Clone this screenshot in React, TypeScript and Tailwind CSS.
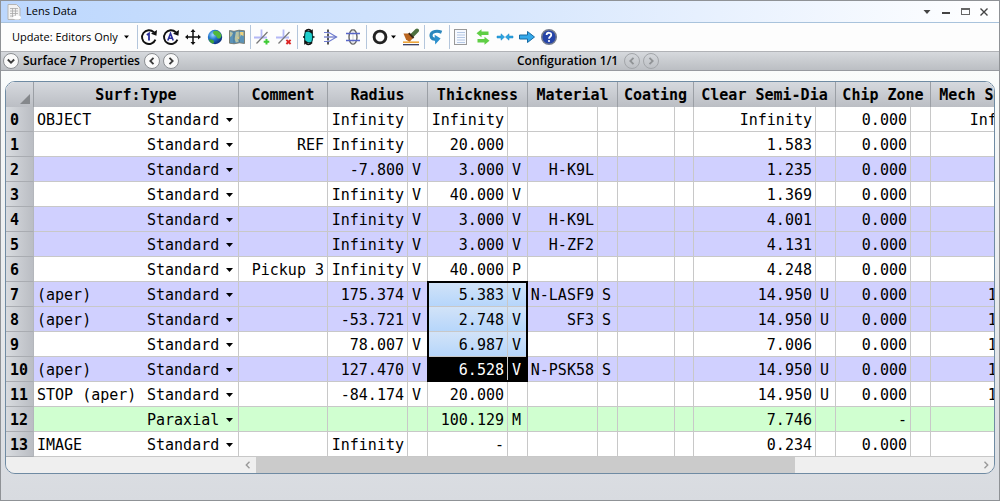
import React from "react";

const UI = "font-['Open_Sans','Noto_Sans',sans-serif]";

type Row = {
  label: string;
  type: string;
  comment?: string;
  radius?: [string, string?];
  thickness: [string, string?];
  material?: [string, string?];
  clear: [string, string?];
  chip: string;
  mech?: string;
  tint?: "violet" | "green";
  pick?: "range" | "active";
};

const rows: Row[] = [
  { label: "OBJECT", type: "Standard", radius: ["Infinity"], thickness: ["Infinity"], clear: ["Infinity"], chip: "0.000", mech: "Infinity" },
  { label: "", type: "Standard", comment: "REF", radius: ["Infinity"], thickness: ["20.000"], clear: ["1.583"], chip: "0.000" },
  { label: "", type: "Standard", radius: ["-7.800", "V"], thickness: ["3.000", "V"], material: ["H-K9L"], clear: ["1.235"], chip: "0.000", tint: "violet" },
  { label: "", type: "Standard", radius: ["Infinity", "V"], thickness: ["40.000", "V"], clear: ["1.369"], chip: "0.000" },
  { label: "", type: "Standard", radius: ["Infinity", "V"], thickness: ["3.000", "V"], material: ["H-K9L"], clear: ["4.001"], chip: "0.000", tint: "violet" },
  { label: "", type: "Standard", radius: ["Infinity", "V"], thickness: ["3.000", "V"], material: ["H-ZF2"], clear: ["4.131"], chip: "0.000", tint: "violet" },
  { label: "", type: "Standard", comment: "Pickup 3", radius: ["Infinity", "V"], thickness: ["40.000", "P"], clear: ["4.248"], chip: "0.000" },
  { label: "(aper)", type: "Standard", radius: ["175.374", "V"], thickness: ["5.383", "V"], material: ["N-LASF9", "S"], clear: ["14.950", "U"], chip: "0.000", mech: "14.950", tint: "violet", pick: "range" },
  { label: "(aper)", type: "Standard", radius: ["-53.721", "V"], thickness: ["2.748", "V"], material: ["SF3", "S"], clear: ["14.950", "U"], chip: "0.000", mech: "14.950", tint: "violet", pick: "range" },
  { label: "", type: "Standard", radius: ["78.007", "V"], thickness: ["6.987", "V"], clear: ["7.006"], chip: "0.000", mech: "14.950", pick: "range" },
  { label: "(aper)", type: "Standard", radius: ["127.470", "V"], thickness: ["6.528", "V"], material: ["N-PSK58", "S"], clear: ["14.950", "U"], chip: "0.000", mech: "14.950", tint: "violet", pick: "active" },
  { label: "STOP (aper)", type: "Standard", radius: ["-84.174", "V"], thickness: ["20.000"], clear: ["14.950", "U"], chip: "0.000", mech: "14.950" },
  { label: "", type: "Paraxial", thickness: ["100.129", "M"], clear: ["7.746"], chip: "-", tint: "green" },
  { label: "IMAGE", type: "Standard", radius: ["Infinity"], thickness: ["-"], clear: ["0.234"], chip: "0.000" },
];

const headers: [string, number][] = [
  ["Surf:Type", 1],
  ["Comment", 1],
  ["Radius", 2],
  ["Thickness", 2],
  ["Material", 2],
  ["Coating", 2],
  ["Clear Semi-Dia", 2],
  ["Chip Zone", 2],
  ["Mech Semi-Dia", 2],
];

function Caret({ className = "w-[7px]" }: { className?: string }) {
  return (
    <svg viewBox="0 0 7 4" className={`h-1 ${className}`} aria-hidden="true">
      <path d="M0 0H7L3.5 4Z" fill="currentColor" />
    </svg>
  );
}

function Tool({ label, wide, children }: { label: string; wide?: boolean; children: React.ReactNode }) {
  return (
    <button type="button" aria-label={label} className={`flex h-6 shrink-0 items-center ${wide ? "w-[33px] gap-0.5 pl-1" : "w-[22px] justify-center"}`}>
      <svg viewBox="0 0 18 18" className="h-[18px] w-[18px] shrink-0" fill="none">
        {children}
      </svg>
      {wide && <Caret className="w-[5px]" />}
    </button>
  );
}

const Sep = () => <span className="ml-0.5 h-6 w-px shrink-0 bg-[#b4c6dc]" />;

const Cycle = () => (
  <>
    <path d="M13.8 4.2A6.9 6.9 0 1 0 15.4 11.6" stroke="#111" strokeWidth="1.9" />
    <path d="M11 5.8L17 2L16.4 7.8Z" fill="#111" />
  </>
);

const Axes = () => (
  <>
    <path d="M8.5 1.5V10.5M1 9.5H14" stroke="#b4b8f6" strokeWidth="1.8" />
    <path d="M3.5 15.5L14.5 4" stroke="#777" strokeWidth="1.2" />
  </>
);

function Toolbar() {
  return (
    <div className={`flex h-[28px] items-center bg-[#fdfdfd] pl-[11px] ${UI} text-[11px] text-black`}>
      <label className="relative flex w-[125px] items-center">
        <select aria-label="Update" className="w-full appearance-none bg-transparent text-[11px] leading-5 outline-none">
          <option>Update: Editors Only</option>
        </select>
        <Caret className="pointer-events-none absolute right-2 w-[5px]" />
      </label>
      <span className="h-6 w-px shrink-0 bg-[#b4c6dc]" />
      <Tool label="Update once">
        <Cycle />
        <path d="M6.8 7L9 5.5V12.5" stroke="#2a2f9c" strokeWidth="1.8" />
      </Tool>
      <Tool label="Update all">
        <Cycle />
        <path d="M5.8 12.5L8.5 5.5L11.2 12.5M6.8 10.2H10.2" stroke="#2a2f9c" strokeWidth="1.6" />
      </Tool>
      <Tool label="Move">
        <path d="M9 3V15M3 9H15" stroke="#111" strokeWidth="1.5" />
        <path d="M9 1L11.5 4H6.5ZM9 17L11.5 14H6.5ZM1 9L4 6.5V11.5ZM17 9L14 6.5V11.5Z" fill="#111" />
      </Tool>
      <Tool label="Globe">
        <defs>
          <radialGradient id="globe" cx="35%" cy="35%" r="70%">
            <stop offset="0" stopColor="#9fd8ff" />
            <stop offset=".45" stopColor="#2478cf" />
            <stop offset="1" stopColor="#0a2a78" />
          </radialGradient>
        </defs>
        <circle cx="9" cy="9" r="7.2" fill="url(#globe)" />
        <path d="M7.5 3.2C11 1.6 14.5 4 15.5 7.2C15.4 10 13.6 11 12 10.5C10.2 9.6 11 8 9.4 7.4C7.6 6.6 6.4 5 7.5 3.2Z" fill="#52b83c" />
        <path d="M3 11.5C4.8 10.6 7.5 11.6 8 13.4C8.3 14.8 7 15.6 6 15.4C4.4 14.6 3.2 13.2 3 11.5Z" fill="#3fa23a" />
      </Tool>
      <Tool label="Map">
        <path d="M1.5 2.5L6 3.3L11 2.2L16.5 2.8V15.5L11.5 14.8L6 15.8L1.5 15.2Z" fill="#5b93b8" stroke="#77776a" strokeWidth=".9" />
        <path d="M2 3.5L5 5L3.5 8L2 9ZM8 4L11 3.5L14 5L12 9L9.5 10.5L11 13.5L8 14.5L6.5 11Z" fill="#b9c3a4" />
        <path d="M12 4L15.5 4V8L13 7ZM9 10L12 8L11.5 12Z" fill="#efd27c" />
        <path d="M6 3.6V15.6M11.3 2.4V14.6" stroke="#3f6780" strokeWidth=".6" />
      </Tool>
      <Sep />
      <Tool label="Add axis">
        <Axes />
        <path d="M13.5 11V16.6M10.7 13.8H16.3" stroke="#3ecb35" strokeWidth="2" />
      </Tool>
      <Tool label="Remove axis">
        <Axes />
        <path d="M11.4 11.8L15.6 16M15.6 11.8L11.4 16" stroke="#dc2626" strokeWidth="1.9" />
      </Tool>
      <Sep />
      <Tool label="Reverse element">
        <path d="M5.5 3.5H11.5C13 7 13 11 11.5 14.5H5.5C4.2 11 4.2 7 5.5 3.5Z" fill="#1fcfcd" stroke="#0b4a4a" strokeWidth="1.2" />
        <path d="M5 3.6C7 1.4 9.5 1.4 11 2.6M12 14.4C10 16.6 7.5 16.6 6 15.4" stroke="#111" strokeWidth="1.6" />
        <path d="M12.8 1.2V6L8.8 3.8ZM4.2 16.8V12L8.2 14.2Z" fill="#111" />
        <path d="M3 9H5M12.5 9H14.5" stroke="#111" strokeWidth="1.4" />
      </Tool>
      <Tool label="Lens plane">
        <path d="M6 1.5V16.5" stroke="#444" strokeWidth="1.8" strokeDasharray="3 1" />
        <path d="M2 4.5H7L14.5 9L7 13.5H2" stroke="#6f7ccf" strokeWidth="1.2" />
        <path d="M2 9H14.5" stroke="#626ec4" strokeWidth="1.2" />
      </Tool>
      <Tool label="Lens">
        <ellipse cx="9" cy="9" rx="4" ry="7.2" stroke="#666" strokeWidth="1.4" />
        <path d="M9 1V17" stroke="#bbb" strokeWidth=".7" />
        <path d="M2 5.5H16M2 12.5H16" stroke="#5866c8" strokeWidth="1.5" />
      </Tool>
      <Sep />
      <Tool label="Aperture" wide>
        <circle cx="9" cy="9" r="5.9" stroke="#222" strokeWidth="2.9" />
      </Tool>
      <Tool label="Coating">
        <path d="M10 7.5L15 2.5" stroke="#4d7040" strokeWidth="4" strokeLinecap="round" />
        <path d="M1.5 5.5L7.5 5.5L11.5 9.5L7.5 14L4 11.5Z" fill="#b9651f" />
        <path d="M6.8 5.2L11.6 10" stroke="#3a2818" strokeWidth="1.8" />
        <path d="M1 14.2H17" stroke="#eda53b" strokeWidth="1.6" />
        <path d="M1 16.7H17" stroke="#252d55" strokeWidth="1.2" />
      </Tool>
      <Sep />
      <Tool label="Undo">
        <path d="M14.6 4.2C8 1.6 2 5 4.6 9.6C5.3 10.8 6.6 11.3 8 11.2" stroke="#2b86bd" strokeWidth="3.2" />
        <path d="M7.6 6.8L13.6 10.6L8.2 16.4Z" fill="#2b8fcd" />
      </Tool>
      <Sep />
      <Tool label="Report">
        <rect x="2.5" y="1.5" width="12" height="15" fill="#f6f9ff" stroke="#999" />
        <path d="M5 4.5H13M5 7H13M5 9.5H13M5 12H13M5 14.5H13" stroke="#b5c8e4" />
      </Tool>
      <Tool label="Swap">
        <path d="M2.5 5.2L7.5 1.2V3.6H14.5V7H7.5V9.2Z" fill="#5fce45" />
        <path d="M15.5 12.8L10.5 8.8V11H3.5V14.4H10.5V16.8Z" fill="#5fce45" />
      </Tool>
      <Tool label="Fit">
        <path d="M8.6 9L5 5.8V8H1V10H5V12.2ZM9.4 9L13 5.8V8H17V10H13V12.2Z" fill="#29a3e0" stroke="#1c85c4" strokeWidth=".5" />
      </Tool>
      <Tool label="Go">
        <path d="M1.5 7H9.5V3.5L16.5 9L9.5 14.5V11H1.5Z" fill="#35a9ea" stroke="#176aa3" />
      </Tool>
      <Tool label="Help">
        <circle cx="9" cy="9" r="7.3" fill="#2544a8" stroke="#777d8c" strokeWidth="1.5" />
        <path d="M6.6 7C6.8 3.8 11.8 4.2 11.2 7.2C10.9 8.8 9 8.8 9 10.8" stroke="#fff" strokeWidth="1.8" />
        <circle cx="9" cy="13" r="1.1" fill="#fff" />
      </Tool>
    </div>
  );
}

function Round({ label, d, faded }: { label: string; d: string; faded?: boolean }) {
  return (
    <button
      type="button"
      aria-label={label}
      className={`flex h-4 w-4 shrink-0 items-center justify-center rounded-full border ${faded ? "border-[#a3a6aa] text-[#909396]" : "border-[#8b8e92] bg-[#fafafa] text-[#3c3c3c]"}`}
    >
      <svg viewBox="0 0 8 8" className="h-2 w-2" fill="none" stroke="currentColor" strokeWidth="1.8">
        <path d={d} />
      </svg>
    </button>
  );
}

const LEFT = "M5.5 0.8L2.3 4L5.5 7.2";
const RIGHT = "M2.5 0.8L5.7 4L2.5 7.2";

const line = "border-r border-b border-[#c8c8c8] pt-0.5";

function Pair({ value, children, className = "" }: { value: [string, string?]; children?: React.ReactNode; className?: string }) {
  return (
    <>
      <td className={`relative pr-[3px] text-right ${line} ${className}`}>
        {value[0]}
        {children}
      </td>
      <td className={`pl-1 ${line} ${className}`}>{value[1]}</td>
    </>
  );
}

function LensTable() {
  return (
    <table className="w-[1060px] table-fixed border-separate border-spacing-0 bg-white font-['DejaVu_Sans_Mono',monospace] text-[15px] leading-[22px] whitespace-nowrap text-black">
      <colgroup>
        <col className="w-[28px]" />
        <col className="w-[205px]" />
        <col className="w-[89px]" />
        <col className="w-[80px]" />
        <col className="w-[20px]" />
        <col className="w-[80px]" />
        <col className="w-[20px]" />
        <col className="w-[70px]" />
        <col className="w-[20px]" />
        <col className="w-[57px]" />
        <col className="w-[19px]" />
        <col className="w-[122px]" />
        <col className="w-[20px]" />
        <col className="w-[75px]" />
        <col className="w-[20px]" />
        <col className="w-[115px]" />
        <col className="w-[20px]" />
      </colgroup>
      <thead>
        <tr className="h-[25px] bg-linear-to-b from-[#d6d9de] to-[#bbbec4]">
          <th className="border-r border-[#9b9fa5]" aria-label="Select all">
            <svg viewBox="0 0 10 10" className="mt-2 ml-[14px] h-[10px] w-[10px]">
              <path d="M10 0V10H0Z" fill="#85888c" />
            </svg>
          </th>
          {headers.map(([name, span]) => (
            <th key={name} colSpan={span} className="border-r border-[#9b9fa5] text-center font-bold">
              {name}
            </th>
          ))}
        </tr>
      </thead>
      <tbody>
        {rows.map((row, i) => {
          const tint = row.tint === "violet" ? "bg-[#d0d0ff]" : row.tint === "green" ? "bg-[#d0ffd0]" : "bg-white";
          const pick = row.pick === "range" ? "bg-linear-to-b from-[#d2e3f8] to-[#b6d6fb]" : row.pick === "active" ? "bg-black text-white" : "";
          return (
            <tr key={i} className={`h-[25px] ${tint}`}>
              <th className="border-r border-b border-r-[#b4b7bc] border-b-[#a9acb1] bg-linear-to-r from-[#d8dbdf] to-[#babdc3] pt-0.5 pl-1 text-left font-bold">{i}</th>
              <td className={`pl-[3px] ${line}`}>
                <div className="flex items-center">
                  <span className="flex-1">{row.label}</span>
                  <label className="relative flex w-[91px] items-center">
                    <select aria-label={`Type of surface ${i}`} className="w-full appearance-none bg-transparent leading-[22px] outline-none">
                      <option>{row.type}</option>
                    </select>
                    <Caret className="pointer-events-none absolute right-[5px] w-[7px]" />
                  </label>
                </div>
              </td>
              <td className={`pr-[3px] text-right ${line}`}>{row.comment}</td>
              <Pair value={row.radius ?? [""]} />
              <Pair value={row.thickness} className={pick}>
                {i === 7 && <span className="pointer-events-none absolute -top-px -left-px z-10 h-[101px] w-[101px] border-2 border-black" />}
              </Pair>
              <Pair value={row.material ?? [""]} />
              <Pair value={[""]} />
              <Pair value={row.clear} />
              <Pair value={[row.chip]} />
              <Pair value={[row.mech ?? ""]} />
            </tr>
          );
        })}
      </tbody>
    </table>
  );
}

export default function App() {
  return (
    <main className="flex min-h-screen flex-col border border-[#8f9296] bg-[#dadde2]">
      <header className={`flex h-[22px] items-center border-b border-[#a9c3dc] bg-linear-to-r from-[#bcd7fd] via-[#d6e6fd] to-white pr-[7px] pl-1.5 ${UI} text-[11px]`}>
        <svg viewBox="0 0 14 16" className="h-4 w-[14px]" fill="none">
          <path d="M1 .5H9.5L13 4V15.5H1Z" fill="#f2f2f2" stroke="#b5b5b5" />
          <path d="M3 4.5H11M3 7H11M3 9.5H11M3 12H9M5.5 4V13M8.5 4V13" stroke="#a8a8a8" strokeWidth=".8" />
          <ellipse cx="10" cy="13.5" rx="4" ry="2" fill="#fff" />
        </svg>
        <h1 className="ml-[5px] flex-1 text-black">Lens Data</h1>
        <div className="flex items-center gap-[3px] text-[#444]">
          <button type="button" aria-label="Window menu" className="flex h-4 w-4 items-center justify-center">
            <Caret className="w-2" />
          </button>
          <button type="button" aria-label="Minimize" className="flex h-4 w-4 items-center justify-center">
            <span className="mt-0.5 h-0.5 w-2 bg-[#444]" />
          </button>
          <button type="button" aria-label="Maximize" className="flex h-4 w-4 items-center justify-center">
            <span className="h-[7px] w-[9px] border border-t-2 border-[#666]" />
          </button>
          <button type="button" aria-label="Close" className="flex h-4 w-4 items-center justify-center">
            <svg viewBox="0 0 8 8" className="h-2 w-2" fill="none" stroke="currentColor" strokeWidth="1.4">
              <path d="M.5 .5L7.5 7.5M7.5 .5L.5 7.5" />
            </svg>
          </button>
        </div>
      </header>
      <Toolbar />
      <div className={`flex h-5 items-center border-y border-t-[#b0b2b6] border-b-[#979a9f] bg-linear-to-b from-[#d6d9dd] to-[#bbbec3] ${UI} text-[12px] font-semibold text-black`}>
        <div className="flex flex-1 items-center pl-[2px]">
          <Round label="Expand properties" d="M0.8 2.5L4 5.7L7.2 2.5" />
          <h2 className="mr-1 ml-1">Surface 7 Properties</h2>
          <Round label="Previous surface" d={LEFT} />
          <span className="w-[3px]" />
          <Round label="Next surface" d={RIGHT} />
        </div>
        <div className="flex flex-1 items-center pl-8">
          <span className="mr-1.5">Configuration 1/1</span>
          <Round label="Previous configuration" d={LEFT} faded />
          <span className="w-[3px]" />
          <Round label="Next configuration" d={RIGHT} faded />
        </div>
      </div>
      <section className="flex-1 bg-linear-to-b from-[#fafcfb] to-[#d8dbe0] px-1 pt-2.5 pb-6">
        <div className="overflow-hidden rounded-[10px] border border-[#6f8ba3]">
          <LensTable />
          <div className="flex h-4 items-center bg-[#efefef] text-[#999]">
            <span className="w-[233px] shrink-0" />
            <button type="button" aria-label="Scroll left" className="flex h-4 w-[17px] items-center justify-center">
              <svg viewBox="0 0 8 8" className="h-2 w-2" fill="none" stroke="currentColor" strokeWidth="1.4">
                <path d={LEFT} />
              </svg>
            </button>
            <span className="h-4 w-6/11 bg-[#cbcbcb]" />
            <button type="button" aria-label="Scroll right" className="ml-auto flex h-4 w-[17px] items-center justify-center">
              <svg viewBox="0 0 8 8" className="h-2 w-2" fill="none" stroke="currentColor" strokeWidth="1.4">
                <path d={RIGHT} />
              </svg>
            </button>
          </div>
        </div>
      </section>
    </main>
  );
}
